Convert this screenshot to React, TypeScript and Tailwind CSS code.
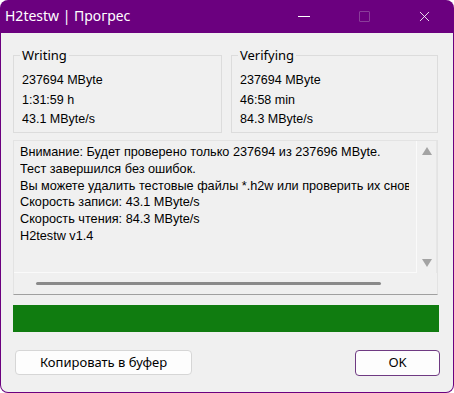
import { X } from "lucide-react";

const GroupBox = ({ title, lines }: { title: string; lines: string[] }) => {
  return (
    <fieldset className="border border-[#dcdcdc] h-[86px] pl-[8px] pr-2">
      <legend className="ml-[-2px] px-[2px] text-[13px] leading-[16px] font-['Noto_Sans',sans-serif] text-black">
        {title}
      </legend>
      <div className="flex flex-col gap-[7px] pt-[11px] font-['Liberation_Sans',sans-serif] text-[12.5px] leading-[12.5px] text-black">
        {lines.map((l) => (
          <div key={l}>{l}</div>
        ))}
      </div>
    </fieldset>
  );
};

const log = [
  "Внимание: Будет проверено только 237694 из 237696 MByte.",
  "Тест завершился без ошибок.",
  "Вы можете удалить тестовые файлы *.h2w или проверить их снова.",
  "Скорость записи: 43.1 MByte/s",
  "Скорость чтения: 84.3 MByte/s",
  "H2testw v1.4",
];

const App = () => {
  return (
    <div className="w-[454px] h-[393px] bg-[#6b007f] rounded-t-[8px] rounded-b-[8px] flex flex-col overflow-hidden">
      {/* Title bar */}
      <div className="h-[33px] flex items-center shrink-0">
        <div className="pl-[5px] pb-[2px] text-white text-[14px] font-['Noto_Sans',sans-serif] flex-1">
          H2testw | Прогрес
        </div>
        <div className="flex items-center h-full">
          <div className="w-[60px] h-full flex items-center justify-center">
            <div className="w-[12px] h-[1px] bg-white" />
          </div>
          <div className="w-[60px] h-full flex items-center justify-center">
            <div className="w-[11px] h-[11px] border border-[#8a3d9a] rounded-[1px]" />
          </div>
          <div className="w-[60px] h-full flex items-center justify-center">
            <X size={17} strokeWidth={1.2} className="text-white" />
          </div>
        </div>
      </div>

      {/* Body */}
      <div className="flex-1 mx-[1px] mb-[1px] bg-[#f0f0f0] rounded-b-[7px] px-[12px] pt-[14px] flex flex-col">
        <div className="grid grid-cols-[209px_207px] gap-[9px]">
          <GroupBox title="Writing" lines={["237694 MByte", "1:31:59 h", "43.1 MByte/s"]} />
          <GroupBox title="Verifying" lines={["237694 MByte", "46:58 min", "84.3 MByte/s"]} />
        </div>

        {/* Log edit */}
        <div className="mt-[7px] w-[425px] h-[155px] border border-[#e3e3e3] border-b-[#a0a0a0] flex flex-col">
          <div className="flex h-[132px]">
            <div className="flex-1 border-r border-b border-[#fafafa] overflow-hidden pl-[6px] pr-[7px] pt-[3px]">
              <div className="overflow-hidden font-['Liberation_Sans',sans-serif] text-[12.7px] leading-[16.8px] text-black whitespace-nowrap">
                {log.map((l) => (
                  <div key={l}>{l}</div>
                ))}
              </div>
            </div>
            <div className="w-[20px] flex flex-col items-center justify-between py-[6px] border-r border-[#e6e6e6]">
              <svg width="10" height="8" viewBox="0 0 10 8">
                <path d="M5 0 L10 8 L0 8 Z" fill="#a3a3a3" />
              </svg>
              <svg width="10" height="8" viewBox="0 0 10 8">
                <path d="M0 0 L10 0 L5 8 Z" fill="#a3a3a3" />
              </svg>
            </div>
          </div>
          <div className="flex-1 flex items-center pl-[22px] pr-[56px]">
            <div className="w-full h-[3px] bg-[#8a8a8a] rounded-full" />
          </div>
        </div>

        {/* Progress bar */}
        <div className="mt-[10px] w-[426px] h-[27px] bg-[#107c10]" />

        {/* Buttons */}
        <div className="mt-[18px] flex justify-between w-[427px] font-['Noto_Sans',sans-serif] text-[13px] text-black">
          <button className="w-[177px] h-[25px] ml-[2px] bg-[#fdfdfd] border border-[#d6d6d6] rounded-[4px]">
            Копировать в буфер
          </button>
          <button className="w-[85px] h-[26px] bg-[#fdfdfd] border border-[#6f3a82] rounded-[4px]">
            OK
          </button>
        </div>
      </div>
    </div>
  );
};

export default App;
